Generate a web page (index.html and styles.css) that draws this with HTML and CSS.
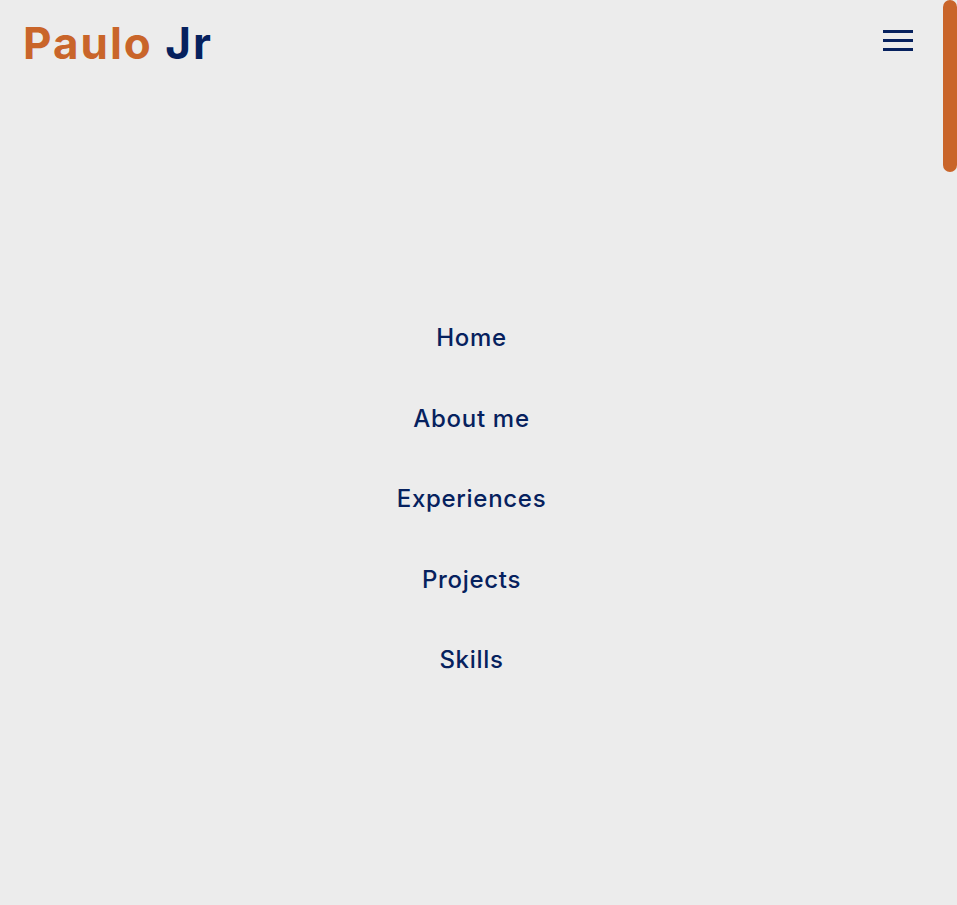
FILE: index.html
```html
<!DOCTYPE html>
<html lang="en">
<head>
<meta charset="utf-8">
<title>Paulo Jr</title>
<link rel="stylesheet" href="styles.css">
</head>
<body>
<div class="frame">
  <div class="page">
    <header class="header">
      <a class="logo" href="#"><span class="logo-first">Paulo</span> <span class="logo-last">Jr</span></a>
      <button class="menu-btn" aria-label="Menu">
        <span class="bar"></span><span class="bar"></span><span class="bar"></span>
      </button>
    </header>
    <nav class="menu">
      <a class="menu-link" href="#">Home</a>
      <a class="menu-link" href="#">About me</a>
      <a class="menu-link" href="#">Experiences</a>
      <a class="menu-link" href="#">Projects</a>
      <a class="menu-link" href="#">Skills</a>
    </nav>
  </div>
  <div class="track"><div class="thumb"></div></div>
</div>
</body>
</html>
```
FILE: styles.css
```css
html, body {
  margin: 0;
  padding: 0;
  height: 100%;
  overflow: hidden;
  background: #ececec;
}
.frame {
  display: flex;
  height: 905px;
}
.page {
  flex: 1;
  display: flex;
  flex-direction: column;
}
.header {
  height: 90px;
  display: flex;
  align-items: center;
  justify-content: space-between;
  padding: 0 30px 0 23px;
  box-sizing: border-box;
}
.logo {
  font-family: Inter, "Open Sans", sans-serif;
  font-weight: 700;
  font-size: 44px;
  text-decoration: none;
  letter-spacing: 2px;
  margin-top: -5px;
}
.logo-first { color: #c9652a; }
.logo-last { color: #06215e; }
.menu-btn {
  background: none;
  border: 0;
  padding: 0;
  width: 30px;
  display: flex;
  flex-direction: column;
  gap: 6px;
  margin-top: -10px;
}
.bar {
  display: block;
  height: 3px;
  background: #06215e;
}
.menu {
  flex: 1;
  display: flex;
  flex-direction: column;
  align-items: center;
  justify-content: center;
  gap: 45.5px;
  padding-top: 2px;
}
.menu-link {
  font-family: Inter, "Open Sans", sans-serif;
  font-weight: 500;
  font-size: 24px;
  line-height: 35px;
  letter-spacing: 0.7px;
  color: #06215e;
  text-decoration: none;
}
.track {
  width: 14px;
}
.thumb {
  height: 172px;
  background: #c9652a;
  border-radius: 7px;
}
```
